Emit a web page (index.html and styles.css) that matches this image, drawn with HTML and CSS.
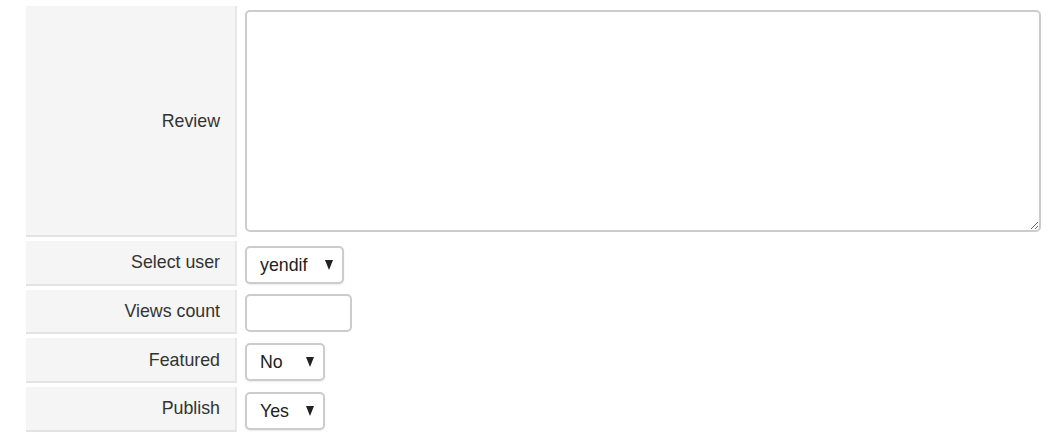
FILE: index.html
```html
<!DOCTYPE html>
<html>
<head>
<meta charset="utf-8">
<link rel="stylesheet" href="styles.css">
</head>
<body>
<div class="form">
  <div class="row row-tall">
    <div class="label">Review</div>
    <div class="value value-tall"><textarea class="textarea"></textarea></div>
  </div>
  <div class="row">
    <div class="label">Select user</div>
    <div class="value"><span class="select-wrap"><select class="select select-user"><option>yendif</option></select></span></div>
  </div>
  <div class="row">
    <div class="label">Views count</div>
    <div class="value"><input class="input" type="text"></div>
  </div>
  <div class="row">
    <div class="label">Featured</div>
    <div class="value"><span class="select-wrap"><select class="select select-small"><option>No</option></select></span></div>
  </div>
  <div class="row">
    <div class="label">Publish</div>
    <div class="value"><span class="select-wrap"><select class="select select-small"><option>Yes</option></select></span></div>
  </div>
</div>
</body>
</html>
```

FILE: styles.css
```css
html, body {
  margin: 0;
  padding: 0;
  background: #fff;
}
body {
  font-family: "Liberation Sans", Arial, sans-serif;
  font-size: 17.8px;
  color: #333;
}
.form {
  display: flex;
  flex-direction: column;
  gap: 4px;
  padding: 6px 22px 0 26px;
}
.row {
  display: flex;
  height: 44.7px;
}
.row-tall {
  height: 231px;
}
.label {
  box-sizing: border-box;
  width: 211px;
  flex: none;
  background: #f5f5f5;
  border-right: 2px solid #e8e8e8;
  border-bottom: 2px solid #e3e3e3;
  display: flex;
  align-items: center;
  justify-content: flex-end;
  padding: 1px 15px 0 0;
}
.value {
  flex: 1;
  padding: 5px 0 0 8px;
  display: flex;
  align-items: flex-start;
}
.value-tall {
  padding-top: 4px;
}
.textarea {
  box-sizing: border-box;
  width: 796px;
  height: 222px;
  border: 2px solid #ccc;
  border-radius: 5px;
  margin: 0;
  padding: 6px;
  font: inherit;
}
.input {
  box-sizing: border-box;
  width: 107px;
  height: 38px;
  border: 2px solid #ccc;
  border-radius: 5px;
  margin: -1px 0 0;
  padding: 0 10px;
  font: inherit;
  background: #fff;
}
.select-wrap {
  position: relative;
  display: inline-block;
}
.select-wrap::after {
  content: "";
  position: absolute;
  right: 11px;
  top: 14px;
  width: 0;
  height: 0;
  border-left: 4.5px solid transparent;
  border-right: 4.5px solid transparent;
  border-top: 10px solid #222;
  pointer-events: none;
}
.select {
  -webkit-appearance: none;
  appearance: none;
  box-sizing: border-box;
  height: 38px;
  border: 2px solid #ccc;
  border-radius: 5px;
  margin: 0;
  padding: 0 0 0 13px;
  font: inherit;
  color: #222;
  background: #fff;
  box-shadow: 0 1px 2px rgba(0, 0, 0, 0.08);
}
.select-user {
  width: 99px;
}
.select-small {
  width: 80px;
}
```
